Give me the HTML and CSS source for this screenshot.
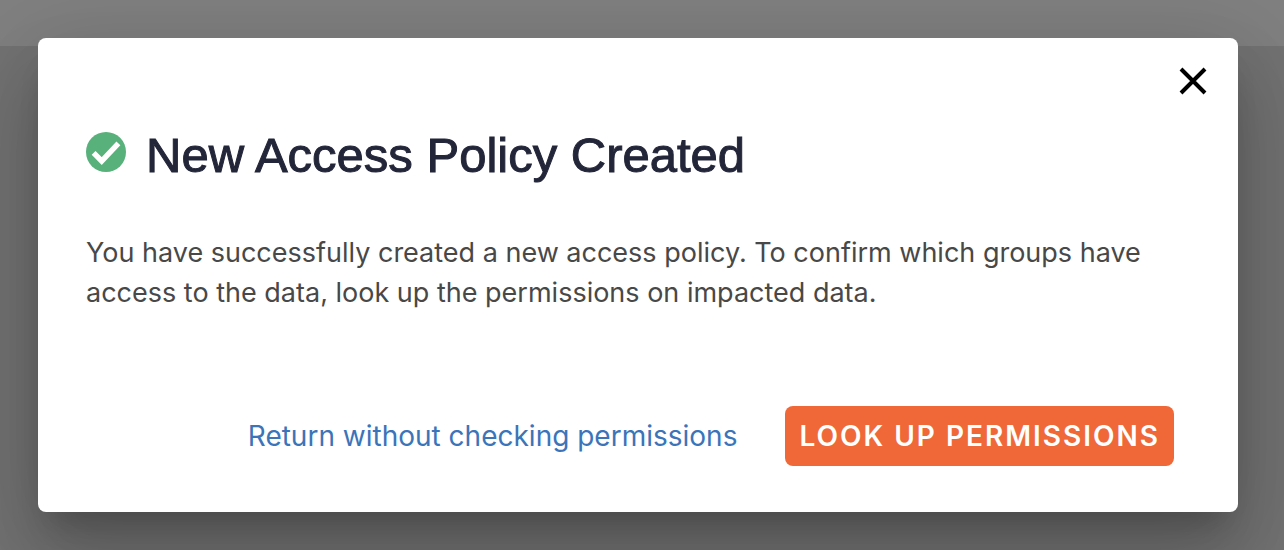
FILE: index.html
```html
<!DOCTYPE html>
<html lang="en">
<head>
<meta charset="utf-8">
<meta name="viewport" content="width=device-width, initial-scale=1">
<title>New Access Policy Created</title>
<link rel="stylesheet" href="styles.css">
</head>
<body class="page">
<main class="dialog" role="dialog" aria-labelledby="dialog-title" aria-describedby="dialog-text">
  <button class="close" type="button" aria-label="Close">
    <svg class="close-icon" viewBox="0 0 28 28" aria-hidden="true"><path d="M2 2 26 26M26 2 2 26"/></svg>
  </button>
  <header class="heading">
    <svg class="status-icon" viewBox="0 0 40 40" aria-hidden="true">
      <circle cx="20" cy="20" r="20" fill="#58b17b"/>
      <path d="M7.6 20.8 15.7 29 32.4 11.4" fill="none" stroke="#fff" stroke-width="5.4"/>
    </svg>
    <h1 class="title" id="dialog-title">New Access Policy Created</h1>
  </header>
  <p class="message" id="dialog-text">You have successfully created a new access policy. To confirm which groups have access to the data, look up the permissions on impacted data.</p>
  <footer class="actions">
    <a class="return-link" href="#">Return without checking permissions</a>
    <button class="primary" type="button">LOOK UP PERMISSIONS</button>
  </footer>
</main>
</body>
</html>
```
FILE: styles.css
```css
* {
  box-sizing: border-box;
}

.page {
  margin: 0;
  min-height: 100vh;
  padding: 38px 46px 38px 38px;
  background: linear-gradient(#808080 46px, #737373 46px);
  font-family: Inter, "Liberation Sans", sans-serif;
}

.dialog {
  display: flex;
  flex-direction: column;
  padding: 24px 64px 46px 48px;
  background: #fff;
  border-radius: 8px;
  box-shadow:
    0 22px 30px -14px rgba(0, 0, 0, 0.2),
    0 48px 76px 6px rgba(0, 0, 0, 0.14),
    0 18px 92px 16px rgba(0, 0, 0, 0.12);
}

.close {
  align-self: flex-end;
  display: grid;
  place-items: center;
  width: 38px;
  height: 38px;
  margin-right: -38px;
  padding: 0;
  border: 0;
  background: none;
  cursor: pointer;
}

.close-icon {
  width: 28px;
  height: 28px;
  fill: none;
  stroke: #000;
  stroke-width: 4;
}

.heading {
  display: flex;
  align-items: flex-start;
  gap: 20px;
  margin-top: 28px;
  padding-top: 4px;
}

.status-icon {
  flex: none;
  width: 40px;
  height: 40px;
}

.title {
  margin: 0;
  color: #232639;
  font: 400 49px/46px "Liberation Sans", Arial, sans-serif;
  -webkit-text-stroke: 1px #232639;
}

.message {
  margin: 55px 0 0;
  color: #484848;
  font-size: 27px;
  line-height: 40px;
}

.actions {
  display: flex;
  align-items: center;
  justify-content: flex-end;
  gap: 48px;
  margin-top: 93px;
}

.return-link {
  color: #3c74b9;
  font-size: 28px;
  line-height: 40px;
  text-decoration: none;
}

.primary {
  height: 60px;
  padding: 0 14px;
  border: 0;
  border-radius: 8px;
  background: #f06837;
  color: #fff;
  font: 600 28px/40px Inter, "Liberation Sans", sans-serif;
  letter-spacing: 2px;
  cursor: pointer;
}
```
